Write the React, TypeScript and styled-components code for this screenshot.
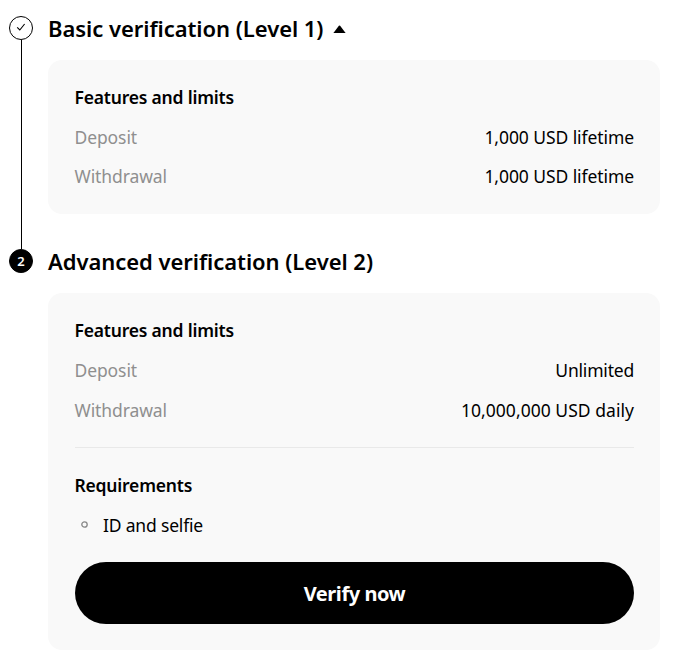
import React from 'react';
import styled, { createGlobalStyle } from 'styled-components';

const GlobalStyle = createGlobalStyle`
  * { box-sizing: border-box; }
  body {
    margin: 0;
    background: #fff;
    color: #000;
    font-family: "Noto Sans", "Open Sans", sans-serif;
  }
`;

const Page = styled.main`
  width: 660px;
  padding: 16px 0 0 9px;
`;

const Step = styled.section`
  display: grid;
  grid-template-columns: 24px 1fr;
  column-gap: 15px;
`;

const Rail = styled.div`
  display: flex;
  flex-direction: column;
  align-items: center;
`;

const Marker = styled.div<{ $filled?: boolean }>`
  display: flex;
  flex: none;
  align-items: center;
  justify-content: center;
  width: 24px;
  height: 24px;
  border: 1px solid #000;
  border-radius: 50%;
  background: ${(p) => (p.$filled ? '#000' : '#fff')};
  color: #fff;
  font-size: 13px;
  font-weight: 600;
  line-height: 22px;
`;

const Connector = styled.div`
  flex: 1;
  width: 1px;
  margin-left: 1px;
  background: #000;
`;

const Content = styled.div<{ $gapAfter?: number }>`
  padding-bottom: ${(p) => p.$gapAfter ?? 0}px;
`;

const Heading = styled.h2`
  display: flex;
  align-items: center;
  gap: 10px;
  height: 24px;
  margin: 0 0 20px;
  font-size: 22px;
  font-weight: 600;
  line-height: 24px;
  letter-spacing: -0.05px;
  white-space: nowrap;
`;

const Card = styled.div`
  padding: 25px 26px 26px 27px;
  border-radius: 14px;
  background: #f9f9f9;
`;

const Group = styled.div<{ $gap: number }>`
  display: flex;
  flex-direction: column;
  gap: ${(p) => p.$gap}px;
`;

const GroupTitle = styled.h3`
  margin: 0 0 0 -0.5px;
  font-size: 17.5px;
  font-weight: 600;
  line-height: 24px;
  letter-spacing: -0.2px;
`;

const LimitRow = styled.div`
  display: flex;
  justify-content: space-between;
  margin-left: -0.5px;
  font-size: 17.5px;
  font-weight: 380;
  line-height: 24px;
`;

const Label = styled.span`
  color: #8f8f8f;
  letter-spacing: -0.1px;
`;

const Value = styled.span<{ $spacing?: number }>`
  letter-spacing: ${(p) => p.$spacing ?? -0.08}px;
`;

const Divider = styled.hr`
  height: 1px;
  margin: 25px 0;
  border: 0;
  background: #e9e9e9;
`;

const RequirementList = styled.ul`
  margin: 16px 0 25px;
  padding: 0;
  list-style: none;
`;

const Requirement = styled.li`
  display: flex;
  align-items: center;
  gap: 15px;
  padding-left: 6px;
  font-size: 17.5px;
  font-weight: 380;
  line-height: 24px;
  letter-spacing: -0.18px;
`;

const BulletIcon = styled.svg`
  flex: none;
  margin-bottom: 2px;
`;

const Caret = styled.svg`
  position: relative;
  top: 0.5px;
`;

const VerifyButton = styled.button`
  display: block;
  width: 100%;
  height: 62px;
  padding: 2px 0 0;
  border: 0;
  border-radius: 31px;
  background: #000;
  color: #fff;
  font: 700 20px/28px "Noto Sans", sans-serif;
  letter-spacing: -0.45px;
`;

const CheckIcon = () => (
  <svg width="22" height="22" viewBox="0 0 22 22" fill="none" aria-hidden="true">
    <path d="M7.2 10.3L9.8 13L14.6 7" stroke="#000" strokeWidth="1.1" />
  </svg>
);

const CaretUp = () => (
  <Caret width="13" height="8" viewBox="0 0 13 8" aria-hidden="true">
    <path d="M0.4 8L5.9 0.8Q6.5 0.1 7.1 0.8L12.6 8Z" fill="#000" />
  </Caret>
);

const Bullet = () => (
  <BulletIcon width="7" height="7" viewBox="0 0 7 7" fill="none" aria-hidden="true">
    <circle cx="3.5" cy="3.5" r="2.7" stroke="#888" strokeWidth="1.3" />
  </BulletIcon>
);

export default function App() {
  return (
    <>
      <GlobalStyle />
      <Page>
        <Step>
          <Rail>
            <Marker><CheckIcon /></Marker>
            <Connector />
          </Rail>
          <Content $gapAfter={35}>
            <Heading>Basic verification (Level 1) <CaretUp /></Heading>
            <Card>
              <Group $gap={15.5}>
                <GroupTitle>Features and limits</GroupTitle>
                <LimitRow><Label>Deposit</Label><Value>1,000 USD lifetime</Value></LimitRow>
                <LimitRow><Label>Withdrawal</Label><Value>1,000 USD lifetime</Value></LimitRow>
              </Group>
            </Card>
          </Content>
        </Step>
        <Step>
          <Rail><Marker $filled>2</Marker></Rail>
          <Content>
            <Heading>Advanced verification (Level 2)</Heading>
            <Card>
              <Group $gap={16}>
                <GroupTitle>Features and limits</GroupTitle>
                <LimitRow><Label>Deposit</Label><Value $spacing={-0.2}>Unlimited</Value></LimitRow>
                <LimitRow><Label>Withdrawal</Label><Value $spacing={0.04}>10,000,000 USD daily</Value></LimitRow>
              </Group>
              <Divider />
              <GroupTitle>Requirements</GroupTitle>
              <RequirementList>
                <Requirement><Bullet />ID and selfie</Requirement>
              </RequirementList>
              <VerifyButton type="button">Verify now</VerifyButton>
            </Card>
          </Content>
        </Step>
      </Page>
    </>
  );
}
